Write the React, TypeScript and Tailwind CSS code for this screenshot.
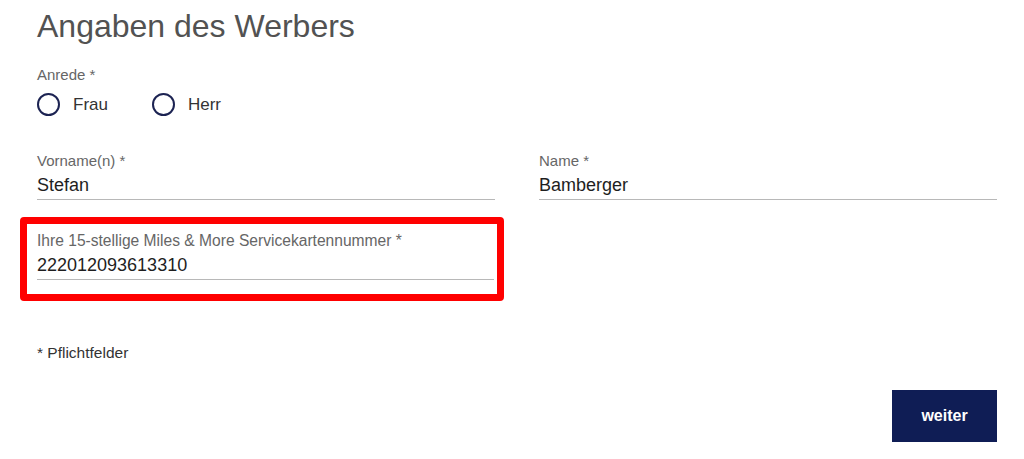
import React from "react";

function Radio({ label }: { label: string }) {
  return (
    <label className="flex items-center gap-[13px]">
      <span className="block w-[23px] h-[23px] rounded-full border-2 border-[#1c2352] bg-white" />
      <span className="text-[17px] leading-[22px] text-[#333]">{label}</span>
    </label>
  );
}

function Field({ label, value, wide }: { label: string; value: string; wide?: boolean }) {
  return (
    <div>
      <div className={wide ? "text-[15.6px] leading-[18px] text-[#666]" : "text-[15px] leading-[18px] text-[#666]"}>
        {label}
      </div>
      <div className="mt-[3px] pb-[2px] border-b border-[#b8b8b8] text-[18px] leading-[24px] text-[#1e1e1e]">
        {value}
      </div>
    </div>
  );
}

export default function App() {
  return (
    <div
      className="w-[1024px] h-[459px] bg-white pl-[37px] pr-[27px] pt-[7px]"
      style={{ fontFamily: '"Liberation Sans", Arial, sans-serif' }}
    >
      <h1 className="text-[32px] leading-[38px] text-[#525252]">Angaben des Werbers</h1>

      <div className="mt-[21px] text-[15px] leading-[18px] text-[#666]">Anrede *</div>
      <div className="mt-[9px] flex gap-[44px]">
        <Radio label="Frau" />
        <Radio label="Herr" />
      </div>

      <div className="mt-[36px] grid grid-cols-2 gap-x-[44px]">
        <Field label="Vorname(n) *" value="Stefan" />
        <Field label="Name *" value="Bamberger" />
      </div>

      <div className="mt-[17px] -ml-[17px] w-[484px] border-[7px] border-[#ff0000] rounded-[4px] pt-[8px] pl-[10px] pr-[3px] pb-[14px]">
        <Field label="Ihre 15-stellige Miles & More Servicekartennummer *" value="222012093613310" wide />
      </div>

      <div className="mt-[43px] text-[15.5px] leading-[18px] text-[#333]">* Pflichtfelder</div>

      <div className="mt-[28px] flex justify-end">
        <button className="w-[105px] h-[52px] bg-[#0f1d55] text-white text-[16px] font-bold">
          weiter
        </button>
      </div>
    </div>
  );
}
